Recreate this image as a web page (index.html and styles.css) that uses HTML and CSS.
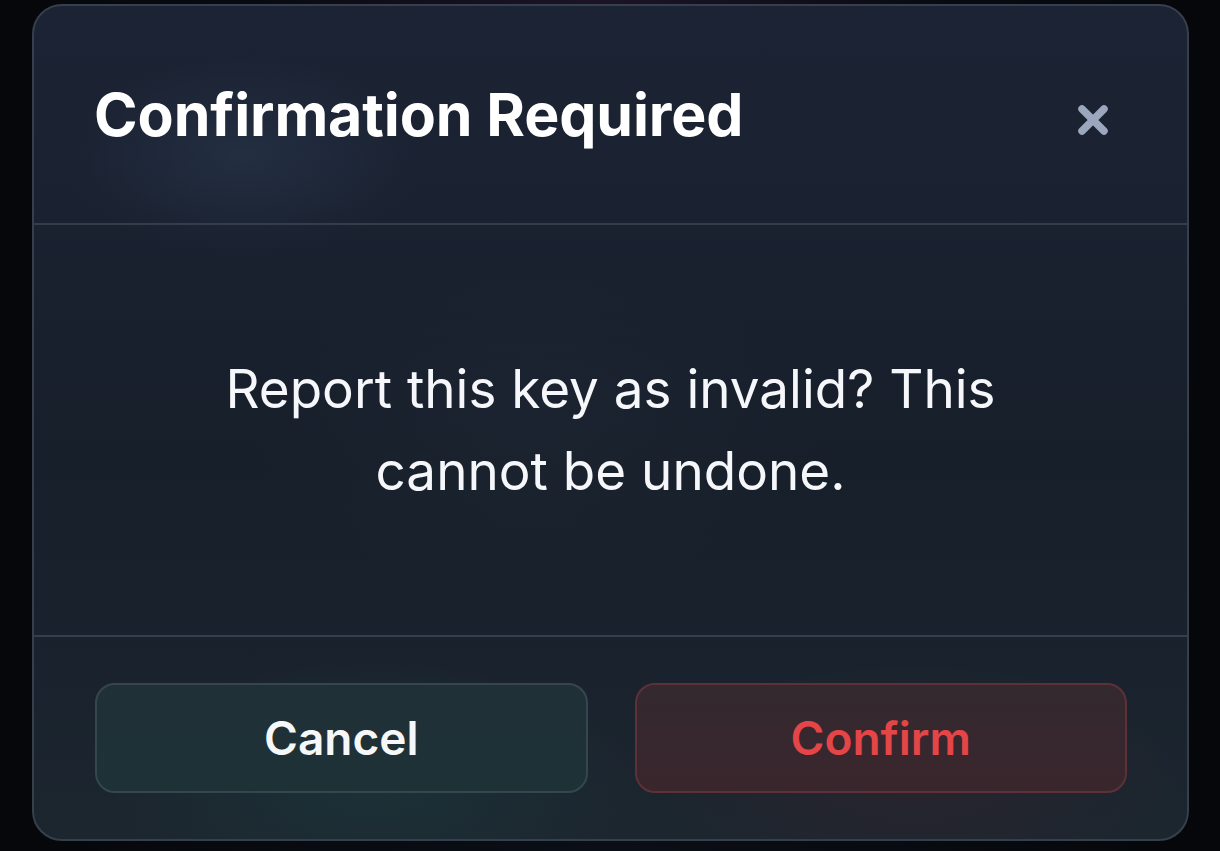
FILE: index.html
```html
<!DOCTYPE html>
<html lang="en">
<head>
<meta charset="utf-8">
<title>Confirmation Required</title>
<link rel="stylesheet" href="styles.css">
</head>
<body>
<div class="page">
  <div class="dialog" role="dialog" aria-labelledby="dlg-title">
    <div class="dialog-header">
      <h2 class="dialog-title" id="dlg-title">Confirmation Required</h2>
      <button class="close-btn" aria-label="Close">
        <svg width="32" height="32" viewBox="0 0 32 32" aria-hidden="true">
          <path d="M5 5 L27 27 M27 5 L5 27" stroke="currentColor" stroke-width="7.5" stroke-linecap="round" fill="none"/>
        </svg>
      </button>
    </div>
    <div class="dialog-body">
      <p class="dialog-message">Report this key as invalid? This cannot be undone.</p>
    </div>
    <div class="dialog-footer">
      <button class="btn btn-cancel">Cancel</button>
      <button class="btn btn-confirm">Confirm</button>
    </div>
  </div>
</div>
</body>
</html>
```

FILE: styles.css
```css
* { box-sizing: border-box; }

html, body {
  margin: 0;
  padding: 0;
  height: 100%;
}

body {
  background: #07090e;
  font-family: Inter, "Noto Sans", "Liberation Sans", sans-serif;
  color: #f8fafc;
  overflow: hidden;
}

.page {
  height: 100%;
  padding: 4px 31px 10px 32px;
  background:
    radial-gradient(ellipse 500px 200px at 600px 0px, rgba(60, 30, 70, 0.35), transparent 70%),
    linear-gradient(90deg, #05070a 0%, #0a0e16 50%, #05070a 100%);
}

.dialog {
  height: 837px;
  display: flex;
  flex-direction: column;
  border: 2px solid #363f4c;
  border-radius: 30px;
  overflow: hidden;
  background:
    radial-gradient(ellipse 260px 140px at 210px 150px, rgba(50, 70, 95, 0.35), transparent 70%),
    radial-gradient(ellipse 380px 180px at 340px 780px, rgba(30, 70, 70, 0.35), transparent 70%),
    radial-gradient(ellipse 380px 160px at 880px 770px, rgba(80, 35, 45, 0.25), transparent 70%),
    radial-gradient(ellipse 400px 240px at 500px 420px, rgba(40, 48, 64, 0.25), transparent 70%),
    linear-gradient(180deg, #1c2334 0%, #1a2130 25%, #171f2a 55%, #1a232d 80%, #1c262f 100%);
}

.dialog-header {
  height: 219px;
  flex: none;
  display: flex;
  align-items: center;
  justify-content: space-between;
  padding: 0 78px 0 60px;
  border-bottom: 2px solid #343e4b;
}

.dialog-title {
  margin: 0;
  font-size: 59px;
  font-weight: 700;
  letter-spacing: -0.1px;
  color: #ffffff;
}

.close-btn {
  background: none;
  border: none;
  padding: 0;
  width: 32px;
  height: 32px;
  margin-top: 10px;
  color: #9ba7bd;
  display: flex;
  cursor: pointer;
}

.dialog-body {
  flex: 1;
  display: flex;
  align-items: center;
  justify-content: center;
  padding: 0 62px;
  border-bottom: 2px solid #343f4b;
}

.dialog-message {
  margin: 0;
  max-width: 820px;
  text-align: center;
  font-size: 53px;
  font-weight: 400;
  line-height: 82px;
  color: #f5f7fa;
}

.dialog-footer {
  height: 202px;
  flex: none;
  display: flex;
  align-items: center;
  gap: 47px;
  padding: 0 60px 0 61px;
}

.btn {
  flex: 1;
  height: 110px;
  border-radius: 20px;
  font-family: Inter, "Noto Sans", "Liberation Sans", sans-serif;
  font-size: 46px;
  font-weight: 600;
  cursor: pointer;
}

.btn-cancel {
  background: linear-gradient(180deg, #203036 0%, #1e3236 100%);
  border: 2px solid #36464e;
  color: #f5f7f8;
}

.btn-confirm {
  background: linear-gradient(180deg, #33292f 0%, #3a262d 100%);
  border: 2px solid #5e3038;
  color: #e44547;
}
```
